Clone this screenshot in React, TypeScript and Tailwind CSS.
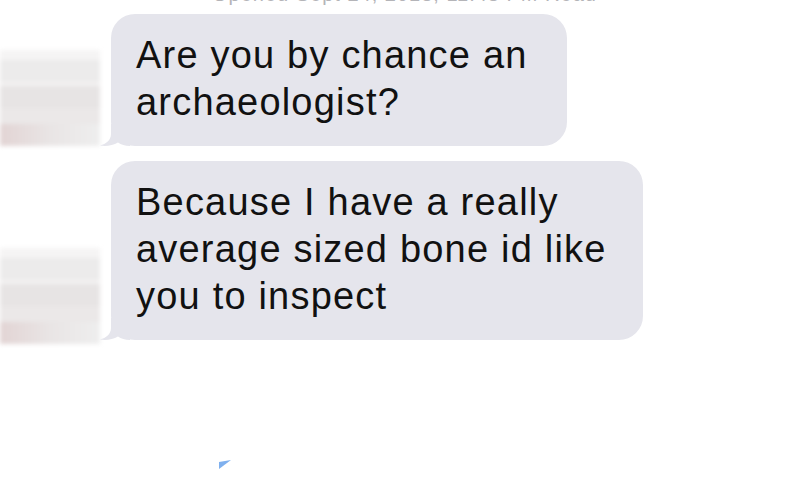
const bubbles = [
  { lines: ['Are you by chance an', 'archaeologist?'], width: 'w-[456px]' },
  { lines: ['Because I have a really', 'average sized bone id like', 'you to inspect'], width: 'w-[532px]' },
];

function Tail() {
  return (
    <svg className="absolute left-[-11px] bottom-0" width="30" height="22" viewBox="0 0 30 22">
      <path d="M11 0 L11 10 C11 16 6 20 0 21.5 C6 22.5 13 21.5 18 18.5 C21 20.5 25 22 30 22 L30 0 Z" fill="#e5e5ec" />
    </svg>
  );
}

function BlurredAvatar({ className }: { className: string }) {
  return (
    <div className={`w-[100px] shrink-0 blur-[2px] flex flex-col ${className}`}>
      <div className="h-[10px] bg-[#f5f4f4]" />
      <div className="h-[22px] bg-[#ecebeb]" />
      <div className="h-[4px] bg-[#f3f2f2]" />
      <div className="h-[22px] bg-[#e7e4e4]" />
      <div className="h-[16px] bg-[#ebe8e8]" />
      <div className="h-[22px] bg-gradient-to-r from-[#e2d4d4] via-[#e9e5e5] to-[#eeeeee]" />
    </div>
  );
}

export default function App() {
  return (
    <div className="w-[800px] h-[500px] bg-white overflow-hidden font-['Liberation_Sans',Arial,sans-serif] text-[#111]">
      <div className="h-[7px] overflow-hidden pl-[212px]">
        <div className="-mt-[17px] text-[20px] leading-[22px] text-[#b4b4b8] tracking-[1px] whitespace-nowrap">
          Opened Sept 24, 2013, 11:48 PM Read
        </div>
      </div>
      <div className="flex flex-col gap-[15px] mt-[7px]">
        {bubbles.map((b, i) => (
          <div key={i} className="flex items-end">
            <BlurredAvatar className={i === 0 ? 'mb-[0px]' : 'mb-[-4px]'} />
            <div className={`relative ml-[11px] ${b.width} bg-[#e5e5ec] rounded-[24px] pl-[25px] pt-[18px] pb-[20px]`}>
              {b.lines.map((l) => (
                <div key={l} className="text-[38px] leading-[47px] tracking-[1.2px] whitespace-nowrap">{l}</div>
              ))}
              <Tail />
            </div>
          </div>
        ))}
      </div>
      <div className="pl-[218px] pt-[120px]">
        <svg width="14" height="10" viewBox="0 0 14 10" className="blur-[0.6px]">
          <path d="M1 2 L13 0 L1 9 Z" fill="#7fb0ee" />
        </svg>
      </div>
    </div>
  );
}
